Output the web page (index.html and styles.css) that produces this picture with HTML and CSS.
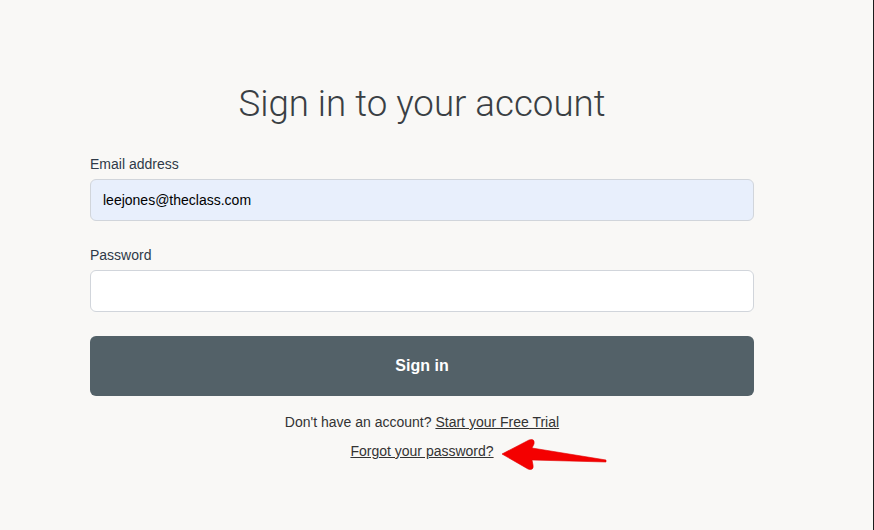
FILE: index.html
```html
<!DOCTYPE html>
<html lang="en">
<head>
<meta charset="utf-8">
<title>Sign in</title>
<link rel="stylesheet" href="styles.css">
</head>
<body>
<div class="page">
  <div class="card">
    <h1 class="title">Sign in to your account</h1>
    <form class="form">
      <label class="field">
        <span class="label">Email address</span>
        <input class="input input-filled" type="email" value="leejones@theclass.com">
      </label>
      <label class="field field-second">
        <span class="label">Password</span>
        <input class="input" type="password">
      </label>
      <button class="button" type="button">Sign in</button>
    </form>
    <p class="note">Don't have an account? <a class="link" href="#">Start your Free Trial</a></p>
    <p class="note note-forgot"><a class="link" href="#">Forgot your password?</a></p>
  </div>
  <svg class="arrow" width="112" height="38" viewBox="0 0 112 38">
    <path d="M4,18 L31,4 Q37,2 36,8 L34,12 L108,24 L108,26 L34,24 L35,29 Q36,35 30,33 Z" fill="#f40000" stroke="#e00000" stroke-width="0.6" stroke-linejoin="round"/>
  </svg>
</div>
</body>
</html>
```

FILE: styles.css
```css
html, body {
  margin: 0;
  padding: 0;
  background: #f9f8f6;
}
.page {
  position: relative;
  width: 874px;
  height: 530px;
  box-sizing: border-box;
  border-right: 1px solid #1c1c1c;
  font-family: "Liberation Sans", Arial, sans-serif;
  color: #333;
}
.card {
  width: 664px;
  margin-left: 90px;
  padding-top: 82px;
}
.title {
  margin: 0;
  font-family: Roboto, "Liberation Sans", sans-serif;
  font-weight: 300;
  font-size: 36.7px;
  line-height: 44px;
  color: #3a3f44;
  text-align: center;
}
.form {
  display: flex;
  flex-direction: column;
  margin-top: 28px;
}
.field {
  display: flex;
  flex-direction: column;
  gap: 5px;
}
.field-second {
  margin-top: 24px;
}
.label {
  font-size: 14px;
  line-height: 20px;
  color: #2f3a48;
}
.input {
  box-sizing: border-box;
  height: 42px;
  margin: 0;
  padding: 0 12px;
  border: 1px solid #d1d5db;
  border-radius: 6px;
  background: #fff;
  font-family: "Liberation Sans", Arial, sans-serif;
  font-size: 14px;
  color: #000;
  outline: none;
}
.input-filled {
  background: #e8effc;
}
.button {
  margin-top: 24px;
  height: 60px;
  border: 0;
  border-radius: 6px;
  background: #536168;
  color: #fff;
  font-family: "Liberation Sans", Arial, sans-serif;
  font-size: 16px;
  font-weight: 700;
}
.note {
  margin: 16px 0 0;
  font-size: 14px;
  line-height: 20px;
  text-align: center;
  color: #333;
}
.note-forgot {
  margin-top: 9px;
}
.link {
  color: #333;
  text-decoration: underline;
}
.arrow {
  position: absolute;
  left: 498px;
  top: 436px;
}
```
